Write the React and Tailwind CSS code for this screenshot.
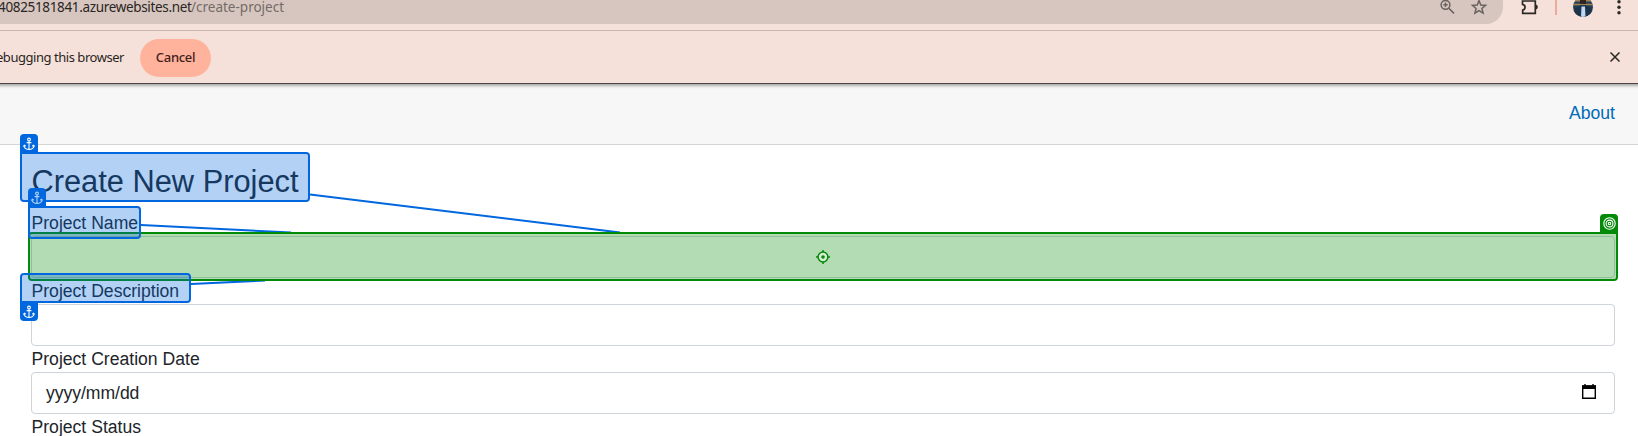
import React from 'react';

function Anchor() {
  return (
    <svg viewBox="0 0 12 14" className="h-[14px] w-[12px]" fill="none" stroke="white" strokeWidth="1.1">
      <circle cx="6" cy="2.5" r="1.4" />
      <path d="M6 4v8.2M3.6 5.6h4.8M1 8.2v1.2C1.6 11.3 3.6 12.4 6 12.4s4.4-1.1 5-3V8.2M0.4 9.6l1-1.4 1.4 1M11.6 9.6l-1-1.4-1.4 1" />
    </svg>
  );
}

function Highlight({ place, badge, faded }) {
  return (
    <div className={`absolute rounded border-2 border-[#0067df] bg-[#0067df]/30 bg-clip-padding ${place}`}>
      <div className={`absolute -left-0.5 flex h-[19px] w-[18px] items-center justify-center bg-[#0067df] ${badge}`}>
        <span className={faded ? 'opacity-70' : ''}><Anchor /></span>
      </div>
    </div>
  );
}

function Toolbar() {
  return (
    <div className="flex h-[31px] items-start border-b border-[#c7b6b0] bg-[#f5e1da]">
      <div className="flex h-6 w-[1503px] items-start rounded-br-[17px] bg-[#d7c6bf]">
        <div className="-ml-[2px] -mt-[3px] flex whitespace-nowrap font-['Noto_Sans',sans-serif] text-[13.5px] leading-5 text-[#2a2523]">
          <span className="w-[193px] tracking-[-0.34px]">40825181841.azurewebsites.net</span>
          <span className="text-[#746b68]">/create-project</span>
        </div>
        <svg className="ml-auto mr-[48px] h-[15px] w-[15px]" viewBox="0 0 15 15" fill="none" stroke="#6a625f" strokeWidth="1.5">
          <circle cx="5.5" cy="4.8" r="4.4" /><path d="M8.8 8.2 14 13.4M3.3 4.8h4.4M5.5 2.6V7" />
        </svg>
      </div>
    </div>
  );
}

export default function App() {
  return (
    <div className="relative h-[436px] w-[1638px] overflow-hidden bg-white font-['Liberation_Sans',Arial,sans-serif] text-[17.6px] text-[#212529]">
      <Toolbar />
      <svg className="absolute left-[1400px] top-0 h-[31px] w-[238px]" viewBox="0 0 238 31" fill="none">
        <path d="M79 .6 80.8 5l4.8.4-3.7 3.1 1.2 4.6-4.1-2.5-4.1 2.5 1.2-4.6-3.7-3.1 4.8-.4z" stroke="#6a625f" strokeWidth="1.5" />
        <path d="M122.5 1h12.8v12.3h-12.6V10c3.2-.4 3.2-5.2-.2-5.7z" stroke="#2b2826" strokeWidth="1.7" />
        <path d="M135.5 4.5c3 0 3 5 0 5z" fill="#2b2826" />
        <path d="M156 0v15" stroke="#e9ac9b" strokeWidth="2" />
        <clipPath id="avatar"><circle cx="183" cy="7" r="10" /></clipPath>
        <g clipPath="url(#avatar)">
          <path d="M172 0h22v18h-22z" fill="#263f58" />
          <path d="M172 .7h22M172 4.5h22" stroke="#a48456" strokeWidth="1.5" />
          <path d="M180 0h6v4h-6z" fill="#30251f" />
          <path d="m175 8 6-3h4l6 3 2 9h-20z" fill="#1d3348" />
          <path d="M181.5 6.5h3.5l.5 11h-4.5z" fill="#bdd8f7" />
        </g>
        <g fill="#2b2826"><circle cx="219" cy="1.7" r="1.7" /><circle cx="219" cy="7.2" r="1.7" /><circle cx="219" cy="12.7" r="1.7" /></g>
      </svg>
      <div className="flex h-[53px] items-center border-b border-[#4d4341] bg-[#f5e1da] pr-[18px] font-['Noto_Sans',sans-serif] text-[13px] text-[#2a2523]">
        <span className="-ml-[4px] mt-px w-[144px] whitespace-nowrap tracking-[-0.46px]">ebugging this browser</span>
        <button className="mt-px h-[38px] w-[71px] rounded-full bg-[#ffb39d] font-medium tracking-[-0.3px] text-[#442019]">Cancel</button>
        <svg className="ml-auto h-[10px] w-[10px]" viewBox="0 0 10 10" stroke="#2a2523" strokeWidth="1.5"><path d="m.5.5 9 9m0-9-9 9" /></svg>
      </div>
      <nav className="flex h-[61px] items-center justify-end border-b border-[#d6d5d5] bg-[#f7f7f7] pb-[2px] pr-[23px] text-[#006bb7] shadow-[inset_0_5px_3px_-3px_#aaa]">
        <a>About</a>
      </nav>
      <main className="pl-[31px] pr-[23px] pt-[17px]">
        <h1 className="h-[48px] pl-[0.5px] text-[30.8px] leading-[40px]">Create New Project</h1>
        <label className="block h-[26px] pl-[0.5px] leading-[26px]">Project Name</label>
        <div className="h-[42px] rounded border border-[#ced4da]" />
        <label className="block h-[26px] pl-[0.5px] leading-[26px]">Project Description</label>
        <div className="h-[42px] rounded border border-[#ced4da]" />
        <label className="block h-[26px] pl-[0.5px] leading-[26px]">Project Creation Date</label>
        <div className="flex h-[42px] items-center justify-between rounded border border-[#ced4da] pl-[14px] pr-[18px]">
          <span className="tracking-[-0.05px]">yyyy/mm/dd</span>
          <svg className="mb-[3px] h-[15px] w-[14px]" viewBox="0 0 14 15" fill="none" stroke="black"><path d="M.7 2h12.6v12.3H.7zM3 0v2m8-2v2" strokeWidth="1.4" /><path d="M0 1.5h14v3.5H0z" fill="black" stroke="none" /></svg>
        </div>
        <label className="block h-[26px] pl-[0.5px] leading-[26px]">Project Status</label>
      </main>
      <div className="absolute left-[28px] top-[232px] flex h-[49px] w-[1590px] items-center justify-center rounded rounded-tr-none border-2 border-[#038a08] bg-[#038a08]/30 bg-clip-padding">
        <svg className="h-[14px] w-[14px]" viewBox="0 0 14 14" fill="none" stroke="#078a0a" strokeWidth="1.5"><circle cx="7" cy="7" r="4.9" fill="#d7edd7" /><path d="M7 0v2.5M7 11.5V14M0 7h2.5M11.5 7H14" /><circle cx="7" cy="7" r="1.8" fill="#078a0a" stroke="none" /></svg>
        <div className="absolute -right-0.5 -top-5 flex h-[19px] w-[18px] items-center justify-center rounded-t bg-[#038a08]">
          <svg className="h-[13px] w-[13px]" viewBox="0 0 13 13" fill="none" stroke="white" strokeWidth="1.1"><circle cx="6.5" cy="6.5" r="5.7" /><circle cx="6.5" cy="6.5" r="3.4" /><circle cx="6.5" cy="6.5" r="1.2" /></svg>
        </div>
      </div>
      <svg className="absolute left-0 top-0 h-[436px] w-[1638px]" viewBox="0 0 1638 436" fill="none" stroke="#0067df" strokeWidth="2">
        <clipPath id="connectors"><path d="M0 0h1638v232H0zM0 281h1638v155H0z" /></clipPath>
        <path d="M310 194.5 620 232.5M141 225 291 232.5M191 284 265 280.5" clipPath="url(#connectors)" />
      </svg>
      <Highlight place="left-[20px] top-[152px] h-[50px] w-[290px] rounded-tl-none" badge="-top-5 rounded-t" />
      <Highlight place="left-[28px] top-[206px] h-[33px] w-[113px] rounded-tl-none" badge="-top-5 rounded-t" faded />
      <Highlight place="left-[20px] top-[273px] h-[30px] w-[171px] rounded-bl-none" badge="-bottom-5 rounded-b" />
    </div>
  );
}
